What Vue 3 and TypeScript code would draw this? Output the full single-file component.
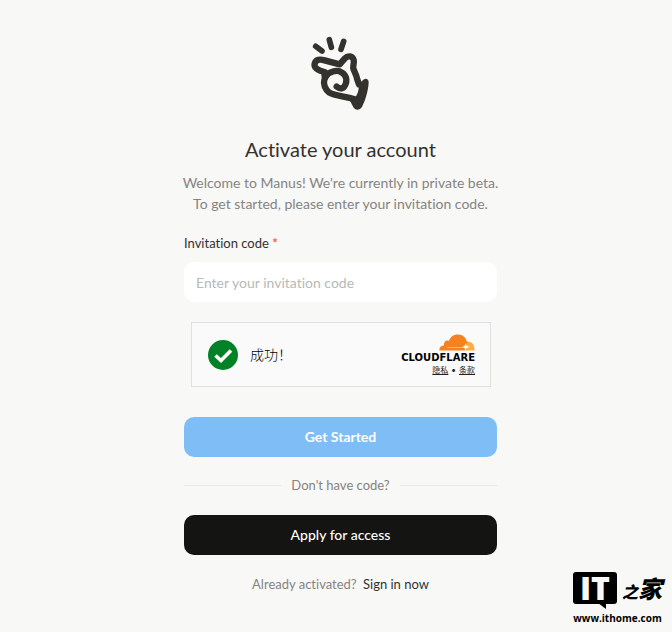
<script setup lang="ts">
import { ref } from 'vue'

const code = ref('')
</script>

<template>
  <div class="page">
    <main class="card">
      <svg class="hand" viewBox="0 0 240 270" aria-hidden="true">
        <g fill="none" stroke="#34322d" stroke-width="19" stroke-linecap="round" stroke-linejoin="round">
          <path stroke-width="17" d="M47 49 L66 63" />
          <path stroke-width="17" d="M88 29 L94 52" />
          <path stroke-width="17" d="M131 34 L123 58" />
          <path d="M74 126 C52 122 41 112 44 101 C47 88 60 87 74 91 L119 103 L134 86 C144 75 158 78 161 90 C164 102 156 108 161 119 C166 130 170 137 171 146 L177 163" />
          <path d="M74 128 C72 140 77 143 73 150 C69 162 76 179 88 188 C100 196 130 199 162 207" />
          <path d="M76 142 C84 125 112 117 126 128 C140 137 143 154 134 168 C128 179 117 176 110 170" />
        </g>
        <path fill="#34322d" d="M171 164 C184 160 187 148 196 146 Q206 146 206 157 C205 184 195 214 186 231 Q175 247 161 233 L149 211 C166 208 177 190 176 168 Z" />
      </svg>

      <h1>Activate your account</h1>
      <p class="intro">Welcome to Manus! We're currently in private beta.<br />To get started, please enter your invitation code.</p>

      <form @submit.prevent>
        <label for="invite">Invitation code <span class="required">*</span></label>
        <input id="invite" v-model="code" type="text" placeholder="Enter your invitation code" />

        <section class="check">
          <svg class="tick" viewBox="0 0 30 30" aria-hidden="true">
            <circle cx="15" cy="15" r="15" fill="#038127" />
            <path d="M7.5 15.5 L13 20.5 L23 10.5" fill="none" stroke="#fff" stroke-width="3.6" />
          </svg>
          <span class="success">成功！</span>
          <div class="brand">
            <svg class="cloud" viewBox="0 0 36 17" aria-hidden="true">
              <path fill="#fbad41" d="M25 16.5 L26 8 C32 6 35.5 10 35.5 16.5 Z" />
              <path fill="#f6821f" d="M0.5 16.5 C0 13 2.5 11.5 5 11.5 C4.5 7.5 7.5 5.5 10 7 C11.5 2 15 0.5 19 0.5 C24 0.5 27 4 28 8 L25.5 16.5 Z" />
              <path d="M8 13.5 H24 L29 12" fill="none" stroke="#fff" stroke-opacity="0.7" stroke-width="0.6" />
              <path fill="#fff" d="M26.5 9.5 L27.5 12 L31 13 L27.5 14 L26.5 16.5 L25.5 14 L23 13 L25.5 12 Z" />
            </svg>
            <span class="wordmark">CLOUDFLARE</span>
            <span class="terms"><a href="#privacy">隐私</a><span>•</span><a href="#terms">条款</a></span>
          </div>
        </section>

        <button class="primary" type="submit">Get Started</button>
      </form>

      <div class="divider"><span>Don't have code?</span></div>
      <button class="dark" type="button">Apply for access</button>
      <p class="signin">Already activated? <a href="#signin">Sign in now</a></p>
    </main>

    <aside class="source">
      <div class="source-logo">
        <span class="bubble">IT</span>
        <span class="home"><small>之</small>家</span>
      </div>
      <span class="site">www.ithome.com</span>
    </aside>
  </div>
</template>

<style>
body {
  background: #f8f8f7;
}
</style>

<style scoped>
* {
  box-sizing: border-box;
}

.page {
  position: relative;
  display: flex;
  justify-content: center;
  min-height: 100vh;
  padding: 30px 0 0 9px;
  font-family: Lato, "Noto Sans CJK SC", sans-serif;
  font-variant-ligatures: none;
  color: #34322d;
}

.card {
  display: flex;
  flex-direction: column;
  width: 100%;
  max-width: 313px;
}

.hand {
  width: 80px;
  height: 90px;
  margin-right: 2px;
  align-self: center;
}

h1 {
  margin: 15px 0 0;
  font-size: 20px;
  line-height: 28px;
  font-weight: 400;
  text-align: center;
}

.intro {
  margin: 9px -4px 0;
  font-size: 14px;
  line-height: 21px;
  color: #858481;
  text-align: center;
  white-space: nowrap;
}

form {
  display: flex;
  flex-direction: column;
}

label {
  margin-top: 19px;
  font-size: 13px;
  line-height: 20px;
}

.required {
  color: #f25a5a;
  font-weight: 700;
}

input {
  width: 100%;
  height: 40px;
  margin-top: 9px;
  padding: 0 12px;
  border: 0;
  border-radius: 10px;
  background: #fff;
  font: inherit;
  font-size: 14px;
  color: inherit;
}

input::placeholder {
  color: #b9b9b7;
  opacity: 1;
}

.check {
  display: flex;
  align-items: center;
  height: 65px;
  margin: 20px 6px 0 7px;
  padding: 0 15px 0 16px;
  border: 1px solid #e0e0e0;
  background: #fafafa;
  color: #232323;
}

.tick {
  width: 30px;
  height: 30px;
}

.success {
  margin-left: 12px;
  font-size: 14px;
  line-height: 20px;
  font-weight: 300;
  color: #000;
}

.brand {
  display: flex;
  flex-direction: column;
  align-items: flex-end;
  margin-left: auto;
}

.cloud {
  width: 36px;
  height: 17px;
}

.wordmark {
  margin-top: 1px;
  font-family: "DejaVu Sans", sans-serif;
  font-size: 10px;
  line-height: 11px;
  font-weight: 700;
  color: #000;
}

.terms {
  display: flex;
  gap: 3px;
  margin-top: 1px;
  font-size: 8px;
  line-height: 12px;
}

.terms a {
  color: inherit;
}

button {
  height: 40px;
  padding: 0 0 2px;
  border: 0;
  border-radius: 10px;
  font: inherit;
  font-size: 14px;
  color: #fff;
}

.primary {
  margin-top: 30px;
  background: #7ebdf5;
  font-weight: 700;
}

.divider {
  display: flex;
  align-items: center;
  gap: 10px;
  margin-top: 18px;
  font-size: 13px;
  line-height: 20px;
  color: #858481;
}

.divider::before,
.divider::after {
  content: "";
  flex: 1;
  height: 1px;
  background: #e8e8e6;
}

.dark {
  margin-top: 20px;
  background: #141412;
  font-weight: 500;
}

.signin {
  margin: 19px 0 0;
  font-size: 13px;
  line-height: 20px;
  color: #858481;
  text-align: center;
}

.signin a {
  margin-left: 3px;
  color: #34322d;
  text-decoration: none;
}

.source {
  position: absolute;
  right: 10px;
  bottom: 6px;
  display: flex;
  flex-direction: column;
  align-items: center;
  color: #000;
}

.source-logo {
  display: flex;
  gap: 5px;
  height: 32px;
}

.bubble {
  position: relative;
  width: 44px;
  height: 32px;
  border-radius: 3px;
  background: #000;
  color: #f8f8f7;
  font-family: "Open Sans", sans-serif;
  font-size: 32px;
  line-height: 32px;
  font-weight: 800;
  text-align: center;
}

.bubble::after {
  content: "";
  position: absolute;
  right: 11px;
  top: 31px;
  border-top: 6px solid #000;
  border-left: 8px solid transparent;
}

.home {
  font-family: "Noto Sans CJK SC", sans-serif;
  font-size: 24px;
  line-height: 32px;
  font-weight: 900;
  font-style: italic;
}

.home small {
  font-size: 16px;
}

.site {
  margin-top: 6px;
  font-family: "Open Sans", sans-serif;
  font-size: 10px;
  line-height: 16px;
  font-weight: 700;
}
</style>
